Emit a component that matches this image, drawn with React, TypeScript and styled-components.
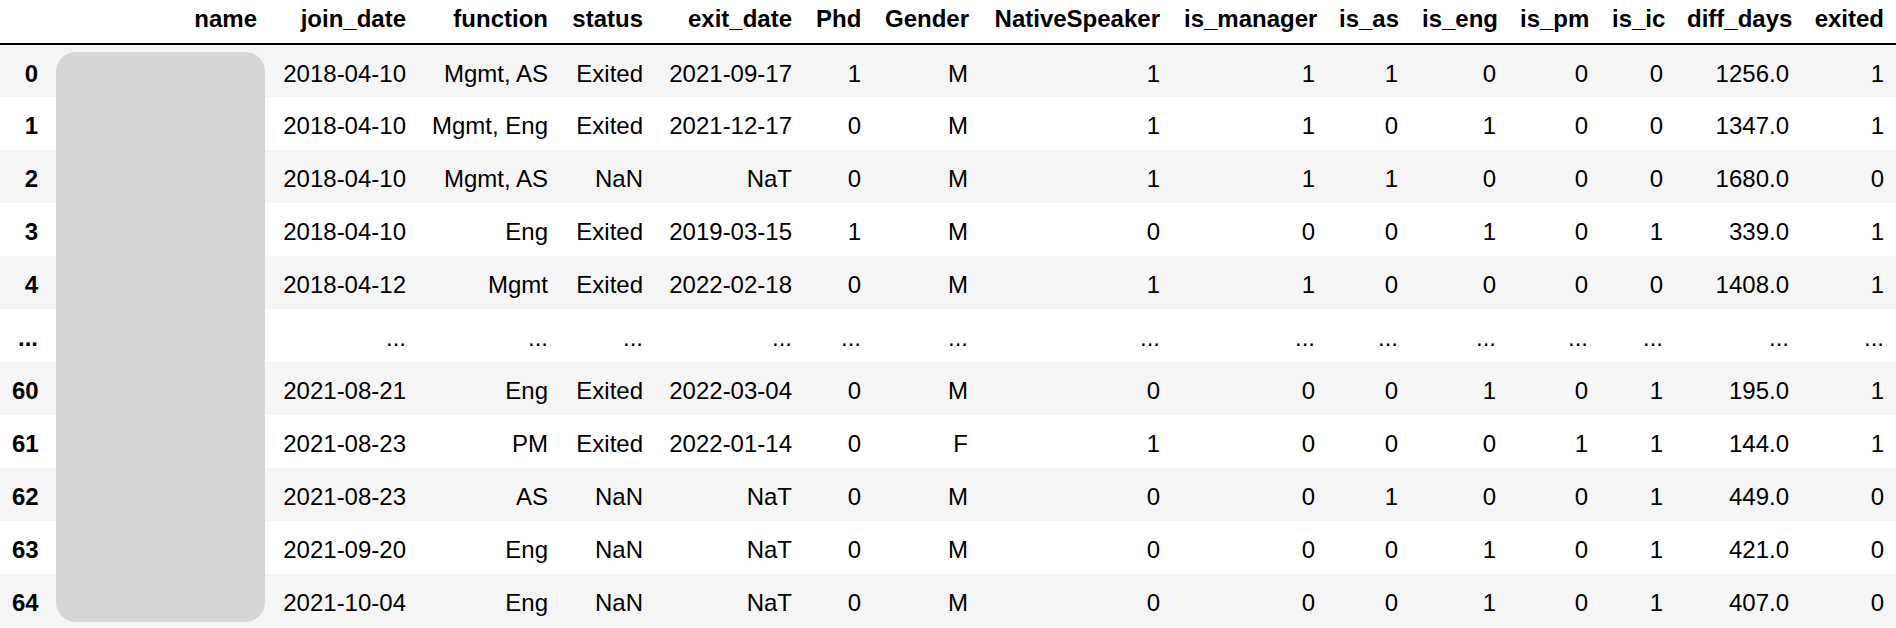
import React from "react";
import styled, { createGlobalStyle } from "styled-components";

const Global = createGlobalStyle`
  html, body { margin: 0; padding: 0; background: #ffffff; }
  body { font-family: "Liberation Sans", Arial, Helvetica, sans-serif; color: #000; }
`;

const Frame = styled.div`
  position: relative;
  width: 1896px;
`;

const Table = styled.table`
  border-collapse: collapse;
  table-layout: fixed;
  width: 1896px;
  font-size: 24px;
  font-family: "Liberation Sans", Arial, Helvetica, sans-serif;
  color: #000;
`;

const HeadRow = styled.tr`
  height: 44px;
  border-bottom: 2px solid #000;
`;

const HeadCell = styled.th`
  font-weight: bold;
  text-align: right;
  vertical-align: middle;
  padding: 0 12px 6px;
  white-space: nowrap;
`;

const BodyRow = styled.tr<{ $striped: boolean }>`
  height: 53px;
  background: ${(p) => (p.$striped ? "#f5f5f5" : "#ffffff")};
`;

const IndexCell = styled.th`
  font-weight: bold;
  text-align: right;
  vertical-align: middle;
  padding: 5px 12px 0;
  white-space: nowrap;
`;

const Cell = styled.td`
  text-align: right;
  vertical-align: middle;
  padding: 5px 12px 0;
  white-space: nowrap;
`;

const Redaction = styled.div`
  position: absolute;
  left: 56px;
  top: 52px;
  width: 209px;
  height: 570px;
  border-radius: 20px;
  background: #d6d6d6;
`;

const columns = [
  { key: "", width: 50 },
  { key: "name", width: 219 },
  { key: "join_date", width: 149 },
  { key: "function", width: 142 },
  { key: "status", width: 95 },
  { key: "exit_date", width: 149 },
  { key: "Phd", width: 69 },
  { key: "Gender", width: 107 },
  { key: "NativeSpeaker", width: 192 },
  { key: "is_manager", width: 155 },
  { key: "is_as", width: 83 },
  { key: "is_eng", width: 98 },
  { key: "is_pm", width: 92 },
  { key: "is_ic", width: 75 },
  { key: "diff_days", width: 126 },
  { key: "exited", width: 95 },
];

type Row = [string, string[]];

const E = "...";
const rows: Row[] = [
  ["0", ["", "2018-04-10", "Mgmt, AS", "Exited", "2021-09-17", "1", "M", "1", "1", "1", "0", "0", "0", "1256.0", "1"]],
  ["1", ["", "2018-04-10", "Mgmt, Eng", "Exited", "2021-12-17", "0", "M", "1", "1", "0", "1", "0", "0", "1347.0", "1"]],
  ["2", ["", "2018-04-10", "Mgmt, AS", "NaN", "NaT", "0", "M", "1", "1", "1", "0", "0", "0", "1680.0", "0"]],
  ["3", ["", "2018-04-10", "Eng", "Exited", "2019-03-15", "1", "M", "0", "0", "0", "1", "0", "1", "339.0", "1"]],
  ["4", ["", "2018-04-12", "Mgmt", "Exited", "2022-02-18", "0", "M", "1", "1", "0", "0", "0", "0", "1408.0", "1"]],
  [E, ["", E, E, E, E, E, E, E, E, E, E, E, E, E, E]],
  ["60", ["", "2021-08-21", "Eng", "Exited", "2022-03-04", "0", "M", "0", "0", "0", "1", "0", "1", "195.0", "1"]],
  ["61", ["", "2021-08-23", "PM", "Exited", "2022-01-14", "0", "F", "1", "0", "0", "0", "1", "1", "144.0", "1"]],
  ["62", ["", "2021-08-23", "AS", "NaN", "NaT", "0", "M", "0", "0", "1", "0", "0", "1", "449.0", "0"]],
  ["63", ["", "2021-09-20", "Eng", "NaN", "NaT", "0", "M", "0", "0", "0", "1", "0", "1", "421.0", "0"]],
  ["64", ["", "2021-10-04", "Eng", "NaN", "NaT", "0", "M", "0", "0", "0", "1", "0", "1", "407.0", "0"]],
];

export default function App() {
  return (
    <Frame>
      <Global />
      <Table>
        <colgroup>
          {columns.map((c, i) => (
            <col key={i} style={{ width: c.width }} />
          ))}
        </colgroup>
        <thead>
          <HeadRow>
            {columns.map((c, i) => (
              <HeadCell key={i}>{c.key}</HeadCell>
            ))}
          </HeadRow>
        </thead>
        <tbody>
          {rows.map(([idx, vals], r) => (
            <BodyRow key={r} $striped={r % 2 === 0}>
              <IndexCell>{idx}</IndexCell>
              {vals.map((v, j) => (
                <Cell key={j}>{v}</Cell>
              ))}
            </BodyRow>
          ))}
        </tbody>
      </Table>
      <Redaction />
    </Frame>
  );
}
